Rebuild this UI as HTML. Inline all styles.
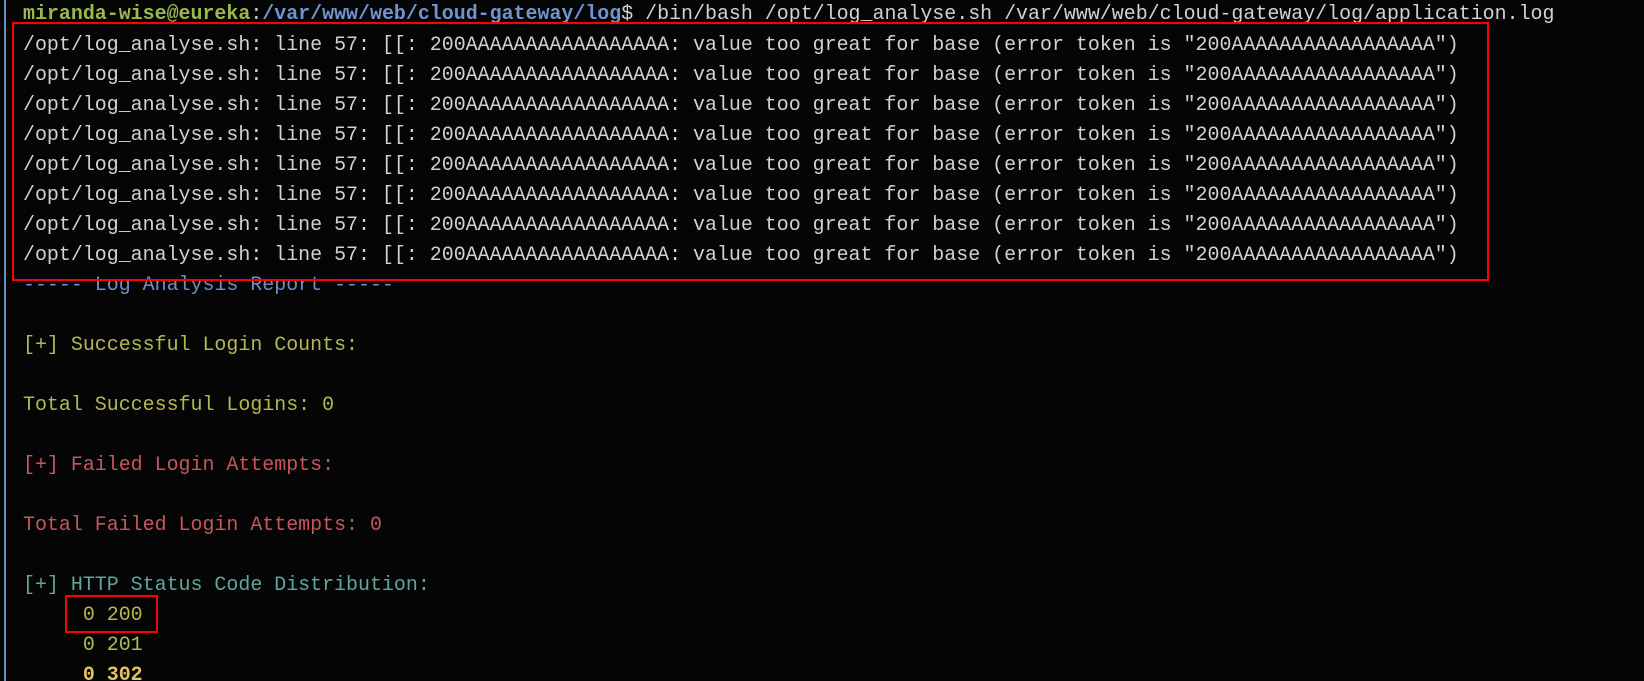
<!DOCTYPE html>
<html><head><meta charset="utf-8"><style>
html,body{margin:0;padding:0;background:#050505;width:1644px;height:681px;overflow:hidden;}
body{position:relative;font-family:"Liberation Mono","DejaVu Sans Mono",monospace;font-size:19.95px;}
.l{position:absolute;left:23px;white-space:pre;line-height:30px;height:30px;color:#d2d2d2;}
.g{color:#9bb84a;font-weight:bold}
.b{color:#6f94cf;font-weight:bold}
.blue{color:#6b8fc6}
.y{color:#b3b84e}
.r{color:#c9555a}
.c{color:#5ea79f}
.yb{color:#e3c45a;font-weight:bold}
.box{position:absolute;border:2.5px solid #ff0000;box-sizing:border-box;}
.bar{position:absolute;left:4px;top:0;width:2px;height:681px;background:#6b8fb8;}
</style></head><body>
<div class="bar"></div>
<div class="l" style="top:-1px"><span class="g">miranda-wise@eureka</span>:<span class="b">/var/www/web/cloud-gateway/log</span>$ /bin/bash /opt/log_analyse.sh /var/www/web/cloud-gateway/log/application.log</div>
<div class="l" style="top:30px">/opt/log_analyse.sh: line 57: [[: 200AAAAAAAAAAAAAAAAA: value too great for base (error token is "200AAAAAAAAAAAAAAAAA")</div>
<div class="l" style="top:60px">/opt/log_analyse.sh: line 57: [[: 200AAAAAAAAAAAAAAAAA: value too great for base (error token is "200AAAAAAAAAAAAAAAAA")</div>
<div class="l" style="top:90px">/opt/log_analyse.sh: line 57: [[: 200AAAAAAAAAAAAAAAAA: value too great for base (error token is "200AAAAAAAAAAAAAAAAA")</div>
<div class="l" style="top:120px">/opt/log_analyse.sh: line 57: [[: 200AAAAAAAAAAAAAAAAA: value too great for base (error token is "200AAAAAAAAAAAAAAAAA")</div>
<div class="l" style="top:150px">/opt/log_analyse.sh: line 57: [[: 200AAAAAAAAAAAAAAAAA: value too great for base (error token is "200AAAAAAAAAAAAAAAAA")</div>
<div class="l" style="top:180px">/opt/log_analyse.sh: line 57: [[: 200AAAAAAAAAAAAAAAAA: value too great for base (error token is "200AAAAAAAAAAAAAAAAA")</div>
<div class="l" style="top:210px">/opt/log_analyse.sh: line 57: [[: 200AAAAAAAAAAAAAAAAA: value too great for base (error token is "200AAAAAAAAAAAAAAAAA")</div>
<div class="l" style="top:240px">/opt/log_analyse.sh: line 57: [[: 200AAAAAAAAAAAAAAAAA: value too great for base (error token is "200AAAAAAAAAAAAAAAAA")</div>
<div class="l blue" style="top:270px">----- Log Analysis Report -----</div>
<div class="l y" style="top:330px">[+] Successful Login Counts:</div>
<div class="l y" style="top:390px">Total Successful Logins: 0</div>
<div class="l r" style="top:450px">[+] Failed Login Attempts:</div>
<div class="l r" style="top:510px">Total Failed Login Attempts: 0</div>
<div class="l c" style="top:570px">[+] HTTP Status Code Distribution:</div>
<div class="l y" style="top:600px">     0 200</div>
<div class="l y" style="top:630px">     0 201</div>
<div class="l yb" style="top:660px">     0 302</div>
<div class="box" style="left:12px;top:22px;width:1477px;height:259px"></div>
<div class="box" style="left:65px;top:595px;width:93px;height:38px"></div>
</body></html>
